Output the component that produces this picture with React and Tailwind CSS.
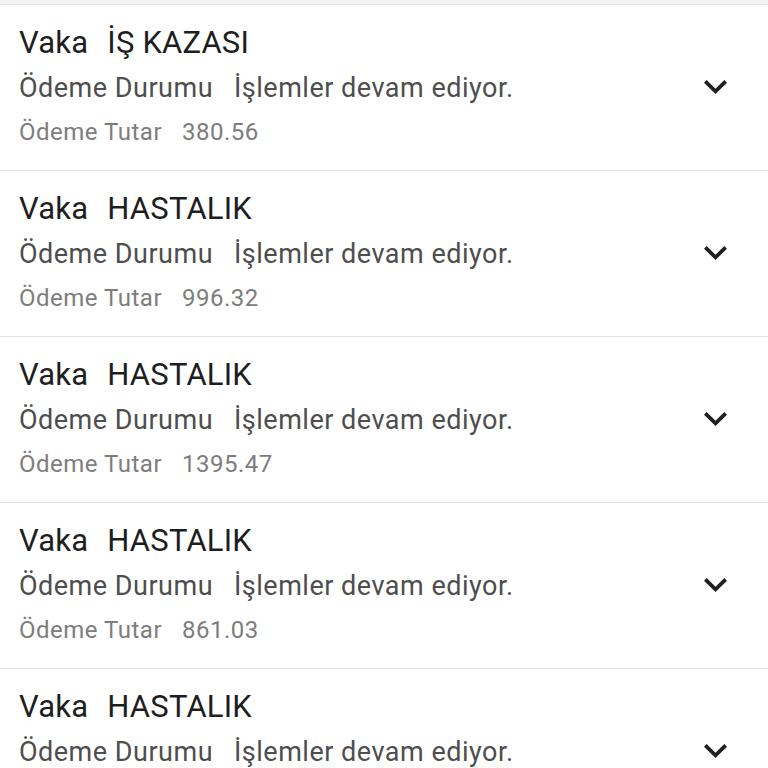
const claims = [
  { type: 'İŞ KAZASI', status: 'İşlemler devam ediyor.', amount: '380.56' },
  { type: 'HASTALIK', status: 'İşlemler devam ediyor.', amount: '996.32' },
  { type: 'HASTALIK', status: 'İşlemler devam ediyor.', amount: '1395.47' },
  { type: 'HASTALIK', status: 'İşlemler devam ediyor.', amount: '861.03' },
  { type: 'HASTALIK', status: 'İşlemler devam ediyor.', amount: '742.18' },
];

function ExpandIcon() {
  return (
    <svg viewBox="6 8.59 12 7.41" preserveAspectRatio="none" className="w-[23px] h-[14px] text-[#202020]">
      <path d="M16.59 8.59L12 13.17 7.41 8.59 6 10l6 6 6-6z" fill="currentColor" />
    </svg>
  );
}

function ClaimRow({ claim }) {
  return (
    <div className="flex items-center justify-between border-b border-[#e2e2e2] bg-white pl-[19px] pr-[41px] pt-[18px] pb-[19px]">
      <div className="flex flex-col">
        <div className="flex text-[31px] leading-[40px] tracking-[0.2px] text-[#1e1e1e]">
          <span>Vaka</span>
          <span className="ml-[19px]">{claim.type}</span>
        </div>
        <div className="flex text-[27px] leading-[50px] tracking-[0.5px] text-[#4e4e4e]">
          <span>Ödeme Durumu</span>
          <span className="ml-[21px]">{claim.status}</span>
        </div>
        <div className="flex text-[24px] leading-[38px] tracking-[0.5px] text-[#7d7d7d]">
          <span>Ödeme Tutar</span>
          <span className="ml-[20px]">{claim.amount}</span>
        </div>
      </div>
      <ExpandIcon />
    </div>
  );
}

export default function App() {
  return (
    <div className="h-[768px] w-[768px] overflow-hidden bg-white font-['Roboto',sans-serif]">
      <div className="h-[5px] border-b border-[#e2e2e2] bg-[#f3f3f3]" />
      {claims.map((c, i) => (
        <ClaimRow key={i} claim={c} />
      ))}
    </div>
  );
}
